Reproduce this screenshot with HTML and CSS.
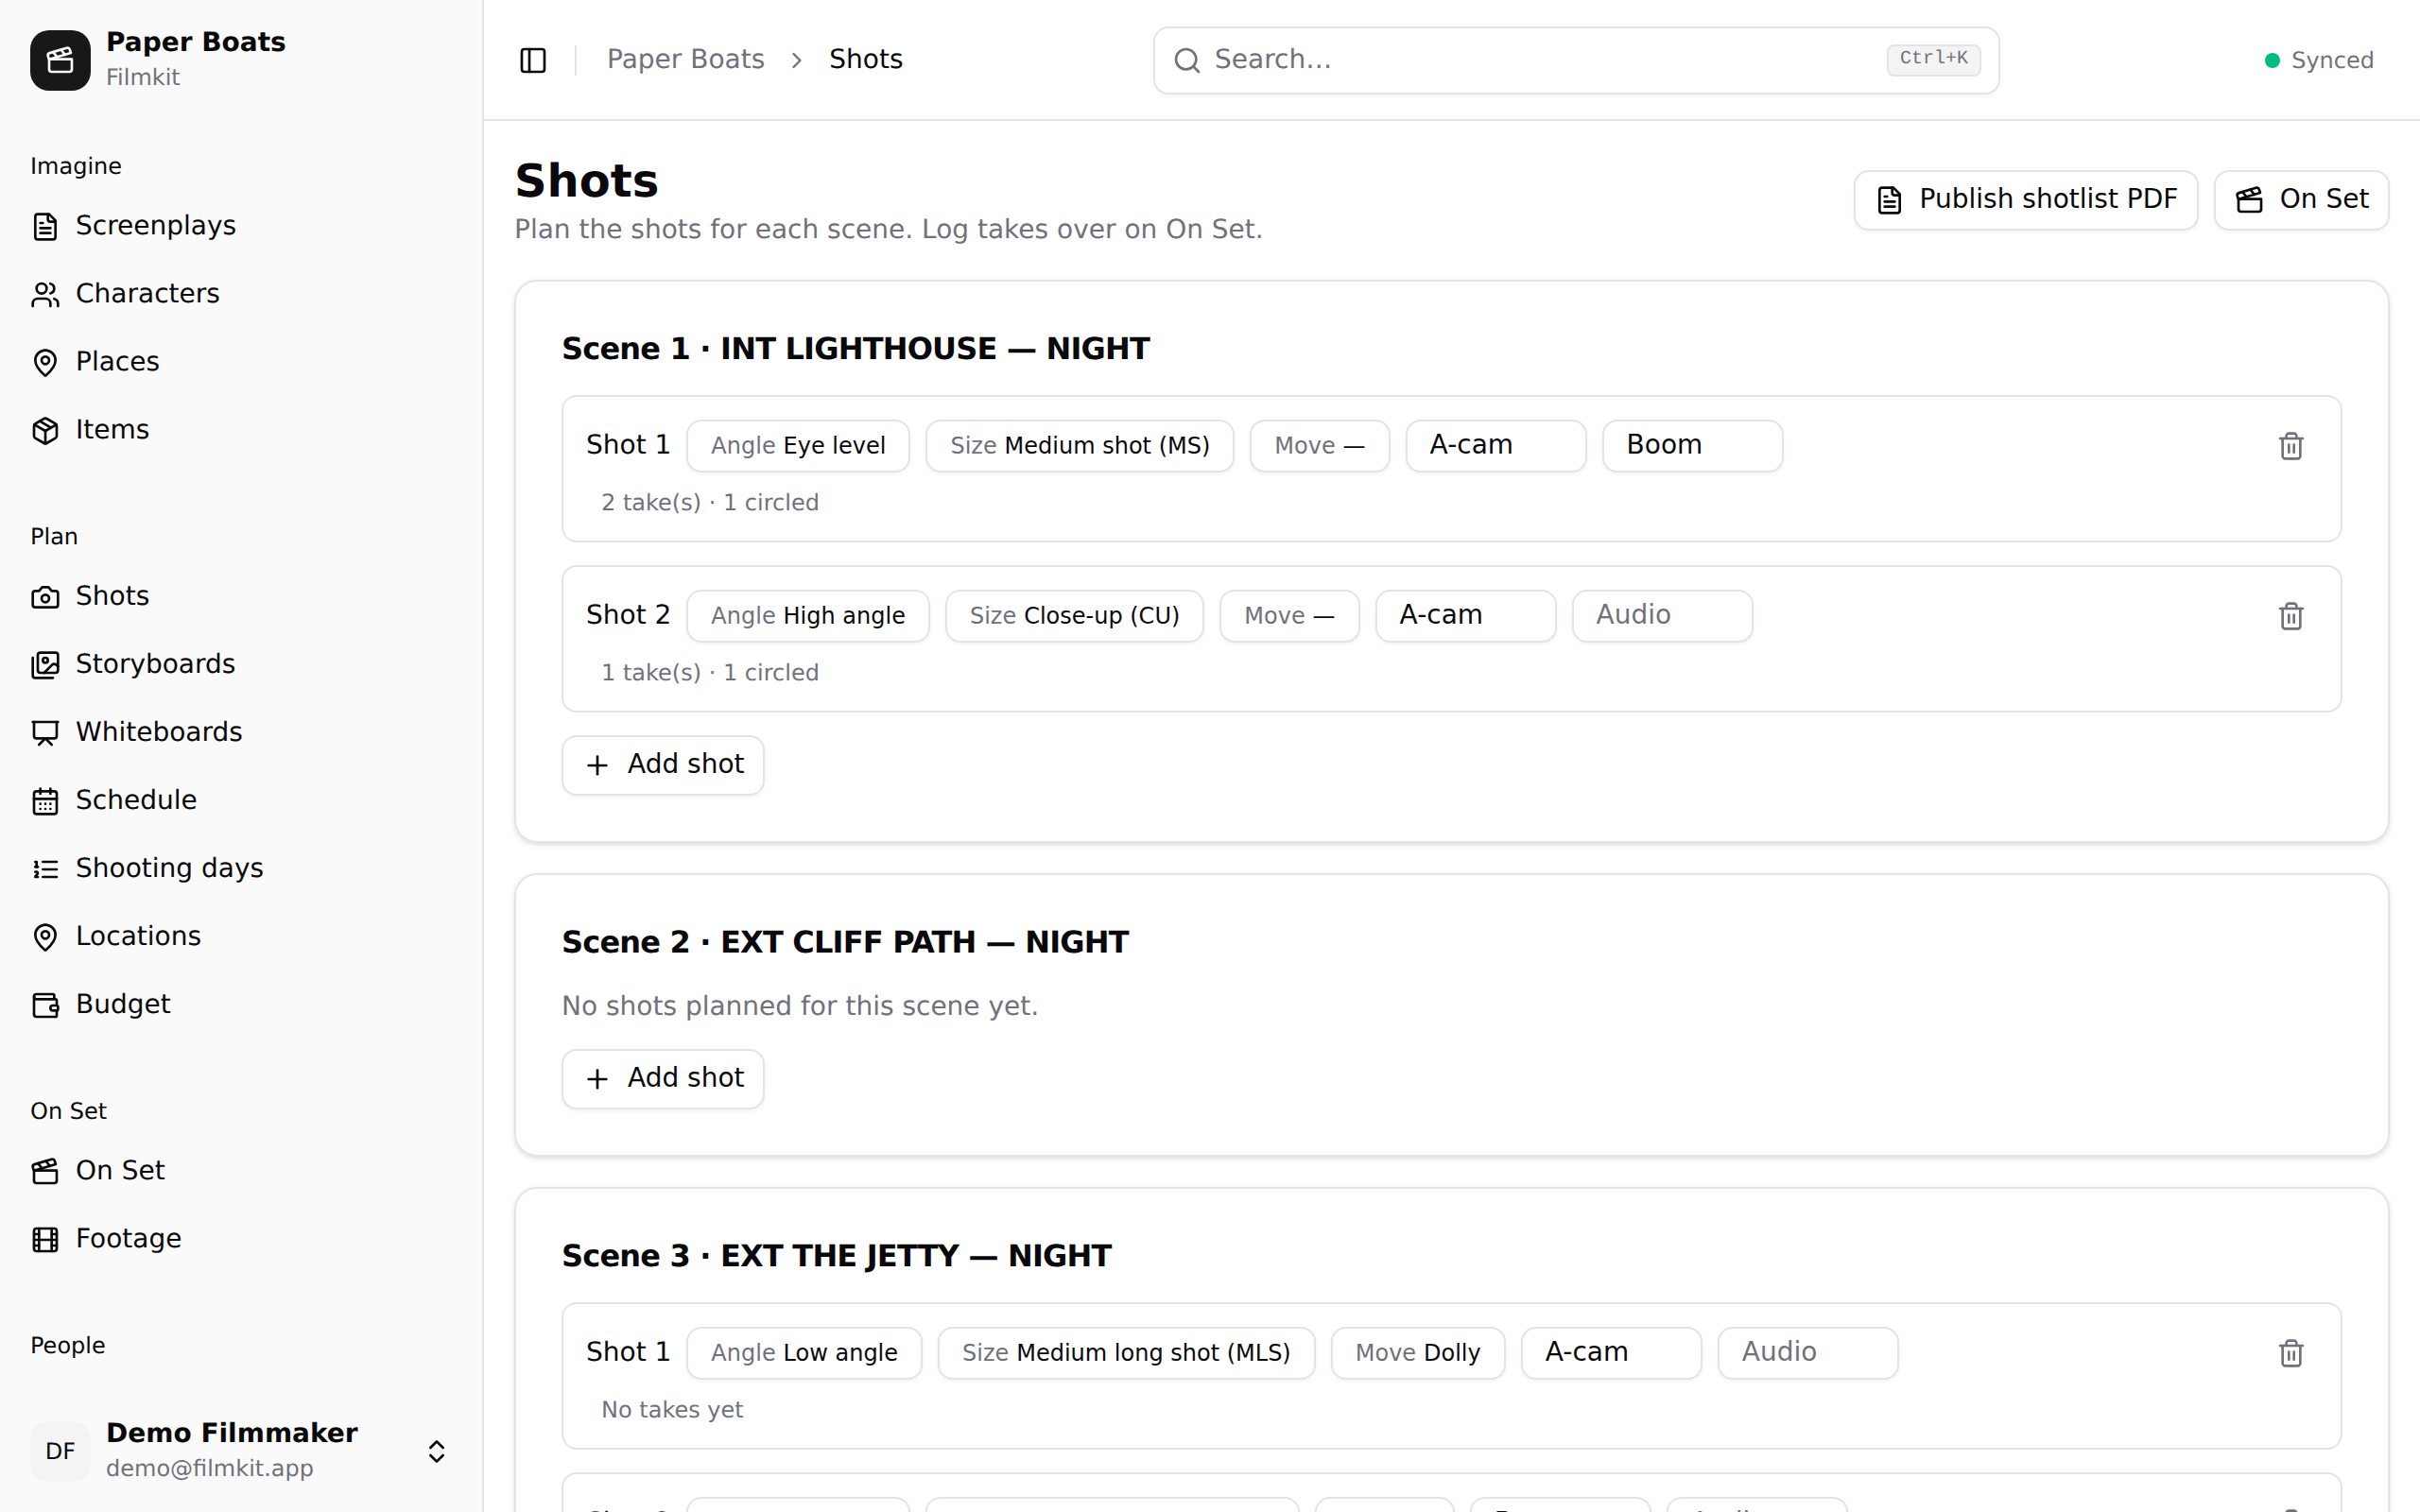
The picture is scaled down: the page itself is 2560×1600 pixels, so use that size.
FILE: index.html
```html
<!DOCTYPE html>
<html lang="en">
<head>
    <meta charset="UTF-8">
    <meta name="viewport" content="width=device-width, initial-scale=1.0">
    <title>Shots - Paper Boats</title>
    <link rel="stylesheet" href="styles.css">
</head>
<body>
    <!-- Icons used more than once -->
    <svg class="sprite" width="0" height="0">
        <symbol id="clapperboard" viewBox="0 0 24 24">
            <path d="M20.2 6 3 11l-.9-2.4c-.3-1.1.3-2.2 1.3-2.5l13.5-4c1.1-.3 2.2.3 2.5 1.3Z"/>
            <path d="m6.2 5.3 3.1 3.9"/>
            <path d="m12.4 3.4 3.1 4"/>
            <path d="M3 11h18v8a2 2 0 0 1-2 2H5a2 2 0 0 1-2-2Z"/>
        </symbol>
        <symbol id="file-text" viewBox="0 0 24 24">
            <path d="M15 2H6a2 2 0 0 0-2 2v16a2 2 0 0 0 2 2h12a2 2 0 0 0 2-2V7Z"/>
            <path d="M14 2v4a2 2 0 0 0 2 2h4"/>
            <path d="M10 9H8"/>
            <path d="M16 13H8"/>
            <path d="M16 17H8"/>
        </symbol>
        <symbol id="map-pin" viewBox="0 0 24 24">
            <path d="M20 10c0 4.993-5.539 10.193-7.399 11.799a1 1 0 0 1-1.202 0C9.539 20.193 4 14.993 4 10a8 8 0 0 1 16 0"/>
            <circle cx="12" cy="10" r="3"/>
        </symbol>
        <symbol id="plus" viewBox="0 0 24 24">
            <path d="M5 12h14"/>
            <path d="M12 5v14"/>
        </symbol>
        <symbol id="trash" viewBox="0 0 24 24">
            <path d="M3 6h18"/>
            <path d="M19 6v14c0 1-1 2-2 2H7c-1 0-2-1-2-2V6"/>
            <path d="M8 6V4c0-1 1-2 2-2h4c1 0 2 1 2 2v2"/>
            <path d="M10 11v6"/>
            <path d="M14 11v6"/>
        </symbol>
    </svg>

    <aside class="sidebar">
        <div class="sidebar-header">
            <div class="logo"><svg class="icon"><use href="#clapperboard"/></svg></div>
            <div class="identity">
                <span class="identity-name">Paper Boats</span>
                <span class="identity-sub">Filmkit</span>
            </div>
        </div>

        <nav class="sidebar-nav">
            <div class="nav-group">
                <div class="nav-label">Imagine</div>
                <ul>
                    <li><a href="#"><svg class="icon"><use href="#file-text"/></svg><span>Screenplays</span></a></li>
                    <li><a href="#">
                        <svg class="icon" viewBox="0 0 24 24">
                            <path d="M16 21v-2a4 4 0 0 0-4-4H6a4 4 0 0 0-4 4v2"/>
                            <circle cx="9" cy="7" r="4"/>
                            <path d="M22 21v-2a4 4 0 0 0-3-3.87"/>
                            <path d="M16 3.13a4 4 0 0 1 0 7.75"/>
                        </svg><span>Characters</span></a></li>
                    <li><a href="#"><svg class="icon"><use href="#map-pin"/></svg><span>Places</span></a></li>
                    <li><a href="#">
                        <svg class="icon" viewBox="0 0 24 24">
                            <path d="M11 21.73a2 2 0 0 0 2 0l7-4A2 2 0 0 0 21 16V8a2 2 0 0 0-1-1.73l-7-4a2 2 0 0 0-2 0l-7 4A2 2 0 0 0 3 8v8a2 2 0 0 0 1 1.73z"/>
                            <path d="M12 22V12"/>
                            <path d="M3.29 7 12 12l8.71-5"/>
                            <path d="m7.5 4.27 9 5.15"/>
                        </svg><span>Items</span></a></li>
                </ul>
            </div>

            <div class="nav-group">
                <div class="nav-label">Plan</div>
                <ul>
                    <li><a href="#">
                        <svg class="icon" viewBox="0 0 24 24">
                            <path d="M14.5 4h-5L7 7H4a2 2 0 0 0-2 2v9a2 2 0 0 0 2 2h16a2 2 0 0 0 2-2V9a2 2 0 0 0-2-2h-3l-2.5-3z"/>
                            <circle cx="12" cy="13" r="3"/>
                        </svg><span>Shots</span></a></li>
                    <li><a href="#">
                        <svg class="icon" viewBox="0 0 24 24">
                            <path d="M18 22H4a2 2 0 0 1-2-2V6"/>
                            <path d="m22 13-1.296-1.296a2.41 2.41 0 0 0-3.408 0L11 18"/>
                            <circle cx="12" cy="8" r="2"/>
                            <rect width="16" height="16" x="6" y="2" rx="2"/>
                        </svg><span>Storyboards</span></a></li>
                    <li><a href="#">
                        <svg class="icon" viewBox="0 0 24 24">
                            <path d="M2 3h20"/>
                            <path d="M21 3v11a2 2 0 0 1-2 2H5a2 2 0 0 1-2-2V3"/>
                            <path d="m7 21 5-5 5 5"/>
                        </svg><span>Whiteboards</span></a></li>
                    <li><a href="#">
                        <svg class="icon" viewBox="0 0 24 24">
                            <path d="M8 2v4"/>
                            <path d="M16 2v4"/>
                            <rect width="18" height="18" x="3" y="4" rx="2"/>
                            <path d="M3 10h18"/>
                            <path d="M8 14h.01M12 14h.01M16 14h.01M8 18h.01M12 18h.01M16 18h.01"/>
                        </svg><span>Schedule</span></a></li>
                    <li><a href="#">
                        <svg class="icon" viewBox="0 0 24 24">
                            <path d="M10 12h11"/>
                            <path d="M10 18h11"/>
                            <path d="M10 6h11"/>
                            <path d="M4 10h2"/>
                            <path d="M4 6h1v4"/>
                            <path d="M6 18H4c0-1 2-2 2-3s-1-1.500-2-1"/>
                        </svg><span>Shooting days</span></a></li>
                    <li><a href="#"><svg class="icon"><use href="#map-pin"/></svg><span>Locations</span></a></li>
                    <li><a href="#">
                        <svg class="icon" viewBox="0 0 24 24">
                            <path d="M19 7V4a1 1 0 0 0-1-1H5a2 2 0 0 0 0 4h15a1 1 0 0 1 1 1v4h-3a2 2 0 0 0 0 4h3a1 1 0 0 0 1-1v-2a1 1 0 0 0-1-1"/>
                            <path d="M3 5v14a2 2 0 0 0 2 2h15a1 1 0 0 0 1-1v-4"/>
                        </svg><span>Budget</span></a></li>
                </ul>
            </div>

            <div class="nav-group">
                <div class="nav-label">On Set</div>
                <ul>
                    <li><a href="#"><svg class="icon"><use href="#clapperboard"/></svg><span>On Set</span></a></li>
                    <li><a href="#">
                        <svg class="icon" viewBox="0 0 24 24">
                            <rect width="18" height="18" x="3" y="3" rx="2"/>
                            <path d="M7 3v18"/>
                            <path d="M3 7.500h4"/>
                            <path d="M3 12h18"/>
                            <path d="M3 16.500h4"/>
                            <path d="M17 3v18"/>
                            <path d="M17 7.500h4"/>
                            <path d="M17 16.500h4"/>
                        </svg><span>Footage</span></a></li>
                </ul>
            </div>

            <div class="nav-group">
                <div class="nav-label">People</div>
            </div>
        </nav>

        <div class="sidebar-footer">
            <div class="avatar">DF</div>
            <div class="identity">
                <span class="identity-name">Demo Filmmaker</span>
                <span class="identity-sub">demo@filmkit.app</span>
            </div>
            <svg class="icon" viewBox="0 0 24 24">
                <path d="m7 15 5 5 5-5"/>
                <path d="m7 9 5-5 5 5"/>
            </svg>
        </div>
    </aside>

    <div class="page">
        <header class="topbar">
            <div class="topbar-left">
                <svg class="icon" viewBox="0 0 24 24">
                    <rect width="18" height="18" x="3" y="3" rx="2"/>
                    <path d="M9 3v18"/>
                </svg>
                <span class="divider"></span>
                <div class="breadcrumb">
                    <a href="#">Paper Boats</a>
                    <svg class="icon icon-sm" viewBox="0 0 24 24"><path d="m9 18 6-6-6-6"/></svg>
                    <span class="current">Shots</span>
                </div>
            </div>
            <div class="search">
                <svg class="icon" viewBox="0 0 24 24">
                    <circle cx="11" cy="11" r="8"/>
                    <path d="m21 21-4.300-4.300"/>
                </svg>
                <span class="search-text">Search…</span>
                <kbd>Ctrl+K</kbd>
            </div>
            <div class="topbar-right">
                <span class="dot"></span>
                <span>Synced</span>
            </div>
        </header>

        <main>
            <div class="page-header">
                <div>
                    <h1>Shots</h1>
                    <p>Plan the shots for each scene. Log takes over on On Set.</p>
                </div>
                <div class="actions">
                    <button class="btn"><svg class="icon"><use href="#file-text"/></svg><span>Publish shotlist PDF</span></button>
                    <button class="btn"><svg class="icon"><use href="#clapperboard"/></svg><span>On Set</span></button>
                </div>
            </div>

            <section class="card">
                <h2>Scene 1 · INT LIGHTHOUSE — NIGHT</h2>
                <div class="shot">
                    <div class="shot-row">
                        <span class="shot-name">Shot 1</span>
                        <button class="chip"><span>Angle</span> Eye level</button>
                        <button class="chip"><span>Size</span> Medium shot (MS)</button>
                        <button class="chip"><span>Move</span> —</button>
                        <input type="text" placeholder="Camera" value="A-cam">
                        <input type="text" placeholder="Audio" value="Boom">
                        <button class="delete"><svg class="icon"><use href="#trash"/></svg></button>
                    </div>
                    <p class="takes">2 take(s) · 1 circled</p>
                </div>
                <div class="shot">
                    <div class="shot-row">
                        <span class="shot-name">Shot 2</span>
                        <button class="chip"><span>Angle</span> High angle</button>
                        <button class="chip"><span>Size</span> Close-up (CU)</button>
                        <button class="chip"><span>Move</span> —</button>
                        <input type="text" placeholder="Camera" value="A-cam">
                        <input type="text" placeholder="Audio">
                        <button class="delete"><svg class="icon"><use href="#trash"/></svg></button>
                    </div>
                    <p class="takes">1 take(s) · 1 circled</p>
                </div>
                <button class="btn"><svg class="icon"><use href="#plus"/></svg><span>Add shot</span></button>
            </section>

            <section class="card">
                <h2>Scene 2 · EXT CLIFF PATH — NIGHT</h2>
                <p class="empty">No shots planned for this scene yet.</p>
                <button class="btn"><svg class="icon"><use href="#plus"/></svg><span>Add shot</span></button>
            </section>

            <section class="card">
                <h2>Scene 3 · EXT THE JETTY — NIGHT</h2>
                <div class="shot">
                    <div class="shot-row">
                        <span class="shot-name">Shot 1</span>
                        <button class="chip"><span>Angle</span> Low angle</button>
                        <button class="chip"><span>Size</span> Medium long shot (MLS)</button>
                        <button class="chip"><span>Move</span> Dolly</button>
                        <input type="text" placeholder="Camera" value="A-cam">
                        <input type="text" placeholder="Audio">
                        <button class="delete"><svg class="icon"><use href="#trash"/></svg></button>
                    </div>
                    <p class="takes">No takes yet</p>
                </div>
                <div class="shot">
                    <div class="shot-row">
                        <span class="shot-name">Shot 2</span>
                        <button class="chip"><span>Angle</span> Eye level</button>
                        <button class="chip"><span>Size</span> Medium close-up (MCU)</button>
                        <button class="chip"><span>Move</span> —</button>
                        <input type="text" placeholder="Camera" value="B-cam">
                        <input type="text" placeholder="Audio">
                        <button class="delete"><svg class="icon"><use href="#trash"/></svg></button>
                    </div>
                </div>
            </section>
        </main>
    </div>
</body>
</html>
```
FILE: styles.css
```css
* {
    box-sizing: border-box;
    margin: 0;
    padding: 0;
}

/* Global Styles */
body {
    display: flex;
    height: 1600px;
    overflow: hidden;
    font-family: "DejaVu Sans", sans-serif;
    font-size: 28px;
    line-height: 40px;
    text-rendering: geometricPrecision;
    background-color: #fff;
    color: #09090b;
}

a {
    color: inherit;
    text-decoration: none;
}

ul {
    list-style: none;
}

button, input {
    font: inherit;
    color: inherit;
    background-color: #fff;
    border: 2px solid #e4e4e7;
    border-radius: 16px;
    box-shadow: 0 2px 4px rgba(0, 0, 0, 0.05);
}

.sprite {
    position: absolute;
}

.icon {
    width: 32px;
    height: 32px;
    flex-shrink: 0;
    fill: none;
    stroke: currentColor;
    stroke-width: 2;
    stroke-linecap: round;
    stroke-linejoin: round;
}

.icon-sm {
    width: 28px;
    height: 28px;
}

/* Sidebar */
.sidebar {
    display: flex;
    flex-direction: column;
    width: 512px;
    height: 1600px;
    flex-shrink: 0;
    background-color: #fafafa;
    border-right: 2px solid #e4e4e7;
}

.sidebar-header, .sidebar-footer {
    display: flex;
    align-items: center;
    gap: 16px;
    height: 128px;
    padding: 0 32px;
    flex-shrink: 0;
}

.logo, .avatar {
    display: flex;
    align-items: center;
    justify-content: center;
    width: 64px;
    height: 64px;
    border-radius: 20px;
}

.logo {
    background-color: #18181b;
    color: #fafafa;
}

.avatar {
    background-color: #f4f4f5;
    font-size: 24px;
}

.identity {
    display: flex;
    flex-direction: column;
    gap: 2px;
    flex: 1;
    padding-bottom: 4px;
}

.identity-name {
    font-weight: bold;
    line-height: 38px;
}

.identity-sub {
    font-size: 24px;
    line-height: 32px;
    color: #71717b;
}

.sidebar-nav {
    display: flex;
    flex-direction: column;
    gap: 16px;
    flex: 1;
    min-height: 0;
    overflow: hidden;
}

.nav-group {
    padding: 16px 32px;
}

.nav-label {
    font-size: 24px;
    line-height: 64px;
}

.nav-group ul {
    display: flex;
    flex-direction: column;
    gap: 8px;
}

.nav-group a {
    display: flex;
    align-items: center;
    gap: 16px;
    height: 64px;
}

.nav-group a span, .btn span, .breadcrumb a, .current, .search-text, .shot-name {
    padding-bottom: 3px;
}

/* Top bar */
.page {
    display: flex;
    flex-direction: column;
    flex: 1;
}

.topbar {
    display: grid;
    grid-template-columns: 672px 896px 1fr;
    align-items: center;
    height: 128px;
    flex-shrink: 0;
    padding: 2px 48px 0 36px;
    border-bottom: 2px solid #e4e4e7;
}

.topbar-left, .topbar-right, .breadcrumb {
    display: flex;
    align-items: center;
}

.divider {
    width: 2px;
    height: 32px;
    margin: 0 32px 0 28px;
    background-color: #e4e4e7;
}

.breadcrumb {
    gap: 20px;
    color: #71717b;
}

.current {
    color: #09090b;
}

.search {
    display: flex;
    align-items: center;
    height: 72px;
    padding: 0 18px;
    border: 2px solid #e4e4e7;
    border-radius: 16px;
    box-shadow: 0 2px 4px rgba(0, 0, 0, 0.05);
    color: #71717b;
}

.search-text {
    flex: 1;
    padding-left: 13px;
}

kbd {
    height: 34px;
    padding: 0 12px;
    border: 2px solid #e4e4e7;
    border-radius: 8px;
    background-color: #f4f4f5;
    font-family: "Liberation Mono", monospace;
    font-size: 20px;
    line-height: 27px;
}

.topbar-right {
    justify-content: flex-end;
    gap: 12px;
    font-size: 24px;
    color: #71717b;
}

.dot {
    width: 16px;
    height: 16px;
    border-radius: 50%;
    background-color: #00bc7d;
}

/* Page content */
main {
    display: flex;
    flex-direction: column;
    gap: 32px;
    padding: 32px;
}

.page-header {
    display: flex;
    align-items: center;
    justify-content: space-between;
    height: 104px;
}

h1 {
    font-size: 48px;
    line-height: 64px;
}

.page-header p, .empty {
    padding-bottom: 3px;
    line-height: 37px;
    color: #71717b;
}

.actions {
    display: flex;
    gap: 16px;
}

.btn {
    display: flex;
    align-items: center;
    gap: 16px;
    height: 64px;
    padding: 0 19.5px 0 20px;
}

.card {
    display: flex;
    flex-direction: column;
    align-items: flex-start;
    gap: 24px;
    padding: 48px;
    border: 2px solid #e4e4e7;
    border-radius: 24px;
    box-shadow: 0 2px 6px rgba(0, 0, 0, 0.1), 0 2px 4px -2px rgba(0, 0, 0, 0.1);
}

h2 {
    padding-bottom: 2px;
    font-size: 32px;
    line-height: 46px;
    letter-spacing: -0.025em;
}

.shot {
    display: flex;
    flex-direction: column;
    gap: 16px;
    width: 100%;
    padding: 24px;
    border: 2px solid #e4e4e7;
    border-radius: 16px;
}

.shot-row {
    display: flex;
    align-items: center;
    gap: 16px;
}

.chip {
    height: 56px;
    padding: 0 24px;
    font-size: 24px;
}

.chip span {
    margin-right: 0.3px;
    color: #71717b;
}

.shot input {
    width: 192px;
    height: 56px;
    padding: 0 24px 3px;
}

.shot input::placeholder {
    color: #71717b;
}

.delete {
    display: flex;
    align-items: center;
    justify-content: center;
    width: 56px;
    height: 56px;
    margin-left: auto;
    border: none;
    box-shadow: none;
    background: none;
    color: #71717b;
}

.takes {
    padding-left: 16px;
    font-size: 24px;
    line-height: 32px;
    color: #71717b;
}
```
